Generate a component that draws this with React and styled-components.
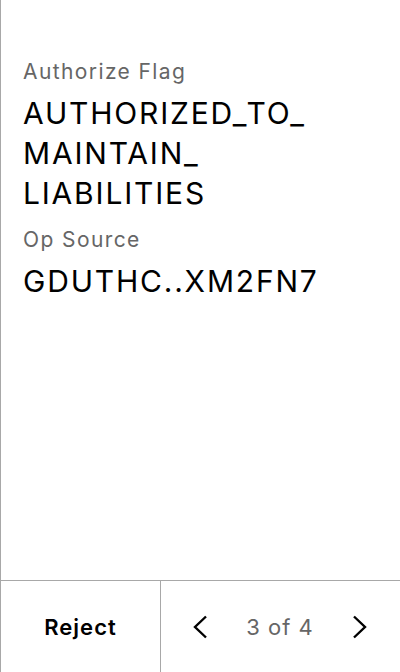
import React from 'react'
import styled, { createGlobalStyle } from 'styled-components'

const GlobalStyle = createGlobalStyle`
  html, body {
    margin: 0;
    padding: 0;
    background: #ffffff;
  }
  body {
    font-family: Inter, "Noto Sans", sans-serif;
  }
`

const fields = [
  { label: 'Authorize Flag', value: 'AUTHORIZED_TO_\nMAINTAIN_\nLIABILITIES' },
  { label: 'Op Source', value: 'GDUTHC..XM2FN7' },
]

const ChevronLeft = () => (
  <svg width="16" height="24" viewBox="0 0 16 24" fill="none">
    <path d="M14 1.5 L3 12 L14 22.5" stroke="#000" strokeWidth="2.4" />
  </svg>
)

const ChevronRight = () => (
  <svg width="16" height="24" viewBox="0 0 16 24" fill="none">
    <path d="M2 1.5 L13 12 L2 22.5" stroke="#000" strokeWidth="2.4" />
  </svg>
)

const App = () => {
  return (
    <>
      <GlobalStyle />
      <Container>
        <Content>
          {fields.map(f => (
            <Field key={f.label}>
              <Label>{f.label}</Label>
              <Value>{f.value}</Value>
            </Field>
          ))}
        </Content>
        <Footer>
          <RejectButton>Reject</RejectButton>
          <Pager>
            <NavButton aria-label="previous"><ChevronLeft /></NavButton>
            <PageText>3 of 4</PageText>
            <NavButton aria-label="next"><ChevronRight /></NavButton>
          </Pager>
        </Footer>
      </Container>
    </>
  )
}

const Container = styled.div`
  height: 672px;
  width: 400px;
  box-sizing: border-box;
  border-left: 1px solid #a8a8a8;
  display: flex;
  flex-direction: column;
`

const Content = styled.div`
  flex: 1;
  padding: 58px 22px 0 22px;
  display: flex;
  flex-direction: column;
  gap: 13px;
`

const Field = styled.div`
  display: flex;
  flex-direction: column;
  gap: 7px;
`

const Label = styled.div`
  font-size: 21px;
  line-height: 28px;
  letter-spacing: 1.4px;
  color: #666666;
`

const Value = styled.div`
  font-size: 30px;
  line-height: 40px;
  letter-spacing: 1.8px;
  color: #000000;
  white-space: pre-line;
`

const Footer = styled.div`
  height: 91px;
  border-top: 1px solid #a8a8a8;
  display: flex;
`

const RejectButton = styled.button`
  width: 160px;
  border: none;
  border-right: 1px solid #a8a8a8;
  background: transparent;
  font-family: Inter, "Noto Sans", sans-serif;
  font-size: 22px;
  font-weight: 600;
  letter-spacing: 1px;
  color: #000;
  padding: 0;
  cursor: pointer;
`

const Pager = styled.div`
  flex: 1;
  display: flex;
  align-items: center;
  justify-content: space-between;
  padding: 0 32px 0 31px;
`

const NavButton = styled.button`
  border: none;
  background: transparent;
  padding: 0;
  display: flex;
  cursor: pointer;
`

const PageText = styled.span`
  font-size: 22px;
  letter-spacing: 1px;
  color: #666666;
`

export default App
